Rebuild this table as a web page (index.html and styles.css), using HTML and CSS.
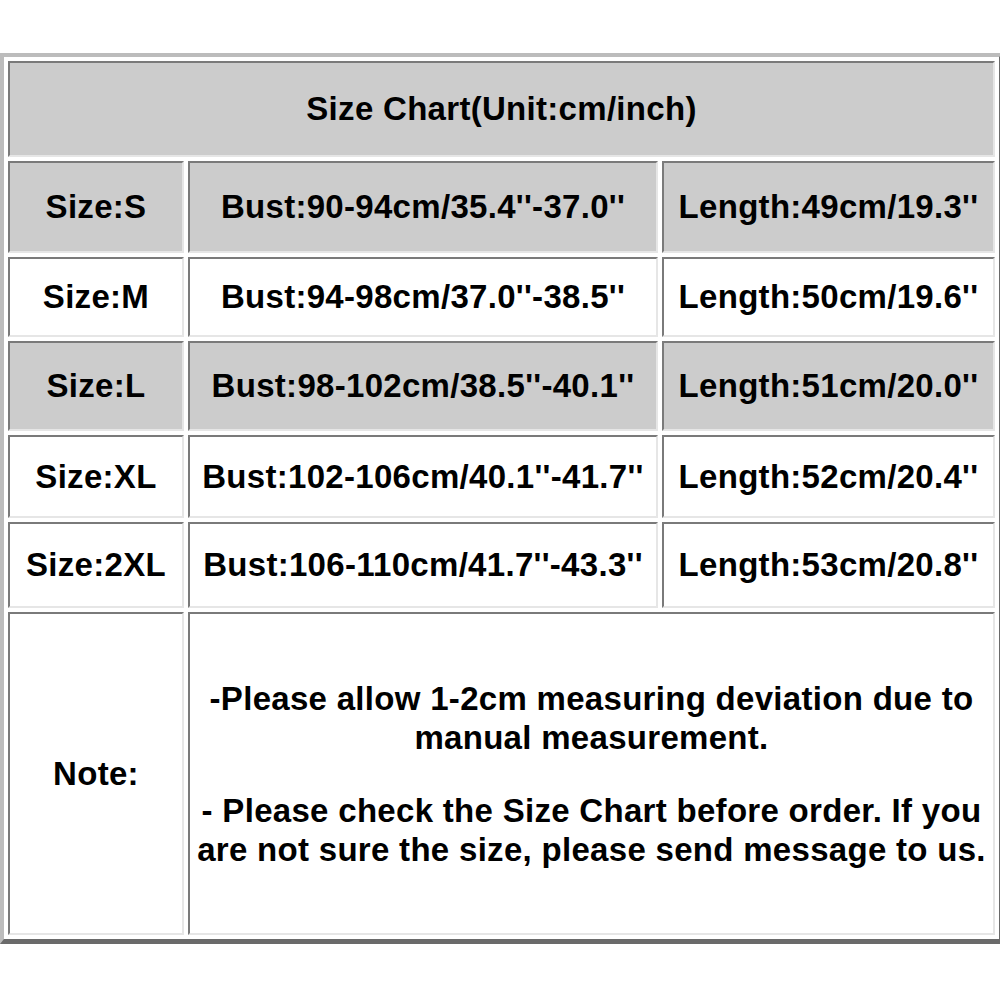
FILE: index.html
```html
<!DOCTYPE html>
<html>
<head>
<meta charset="utf-8">
<link rel="stylesheet" href="styles.css">
</head>
<body>
<div class="page">
<table class="chart">
  <colgroup>
    <col class="c1"><col class="c2"><col class="c3">
  </colgroup>
  <tr class="row-title gray"><td colspan="3">Size Chart(Unit:cm/inch)</td></tr>
  <tr class="row-s gray"><td>Size:S</td><td>Bust:90-94cm/35.4''-37.0''</td><td>Length:49cm/19.3''</td></tr>
  <tr class="row-m"><td>Size:M</td><td>Bust:94-98cm/37.0''-38.5''</td><td>Length:50cm/19.6''</td></tr>
  <tr class="row-l gray"><td>Size:L</td><td>Bust:98-102cm/38.5''-40.1''</td><td>Length:51cm/20.0''</td></tr>
  <tr class="row-xl"><td>Size:XL</td><td>Bust:102-106cm/40.1''-41.7''</td><td>Length:52cm/20.4''</td></tr>
  <tr class="row-2xl"><td>Size:2XL</td><td>Bust:106-110cm/41.7''-43.3''</td><td>Length:53cm/20.8''</td></tr>
  <tr class="row-note"><td>Note:</td><td colspan="2" class="note">
    <p>-Please allow 1-2cm measuring deviation due to<br>manual measurement.</p>
    <p>- Please check the Size Chart before order. If you<br>are not sure the size, please send message to us.</p>
  </td></tr>
</table>
</div>
</body>
</html>
```
FILE: styles.css
```css
html, body {
  margin: 0;
  padding: 0;
  background: #ffffff;
}
.page {
  padding-top: 53px;
  width: 1000px;
}
.chart {
  width: 1000px;
  table-layout: fixed;
  border-collapse: separate;
  border-spacing: 4px;
  border-style: solid;
  border-width: 4px 5px 5px 4px;
  border-color: #bcbcbc #6a6a6a #6a6a6a #bcbcbc;
  font-family: "Liberation Sans", Arial, sans-serif;
  font-weight: bold;
  font-size: 33px;
  letter-spacing: 0.3px;
  color: #000;
}
.c1 { width: 176px; }
.c2 { width: 470px; }
.c3 { width: 333px; }
.chart td {
  box-sizing: border-box;
  border-style: solid;
  border-width: 2px;
  border-color: #7a7a7a #e6e6e6 #e6e6e6 #7a7a7a;
  text-align: center;
  vertical-align: middle;
  padding: 0;
  white-space: nowrap;
  background: #ffffff;
}
.gray td { background: #cccccc; }
.row-title td { height: 96px; }
.row-s td { height: 92px; }
.row-m td { height: 80px; }
.row-l td { height: 90px; }
.row-xl td { height: 83px; }
.row-2xl td { height: 86px; }
.row-note td { height: 323px; }
.note p {
  margin: 0;
  line-height: 39px;
}
.note p + p { margin-top: 34px; }
```
